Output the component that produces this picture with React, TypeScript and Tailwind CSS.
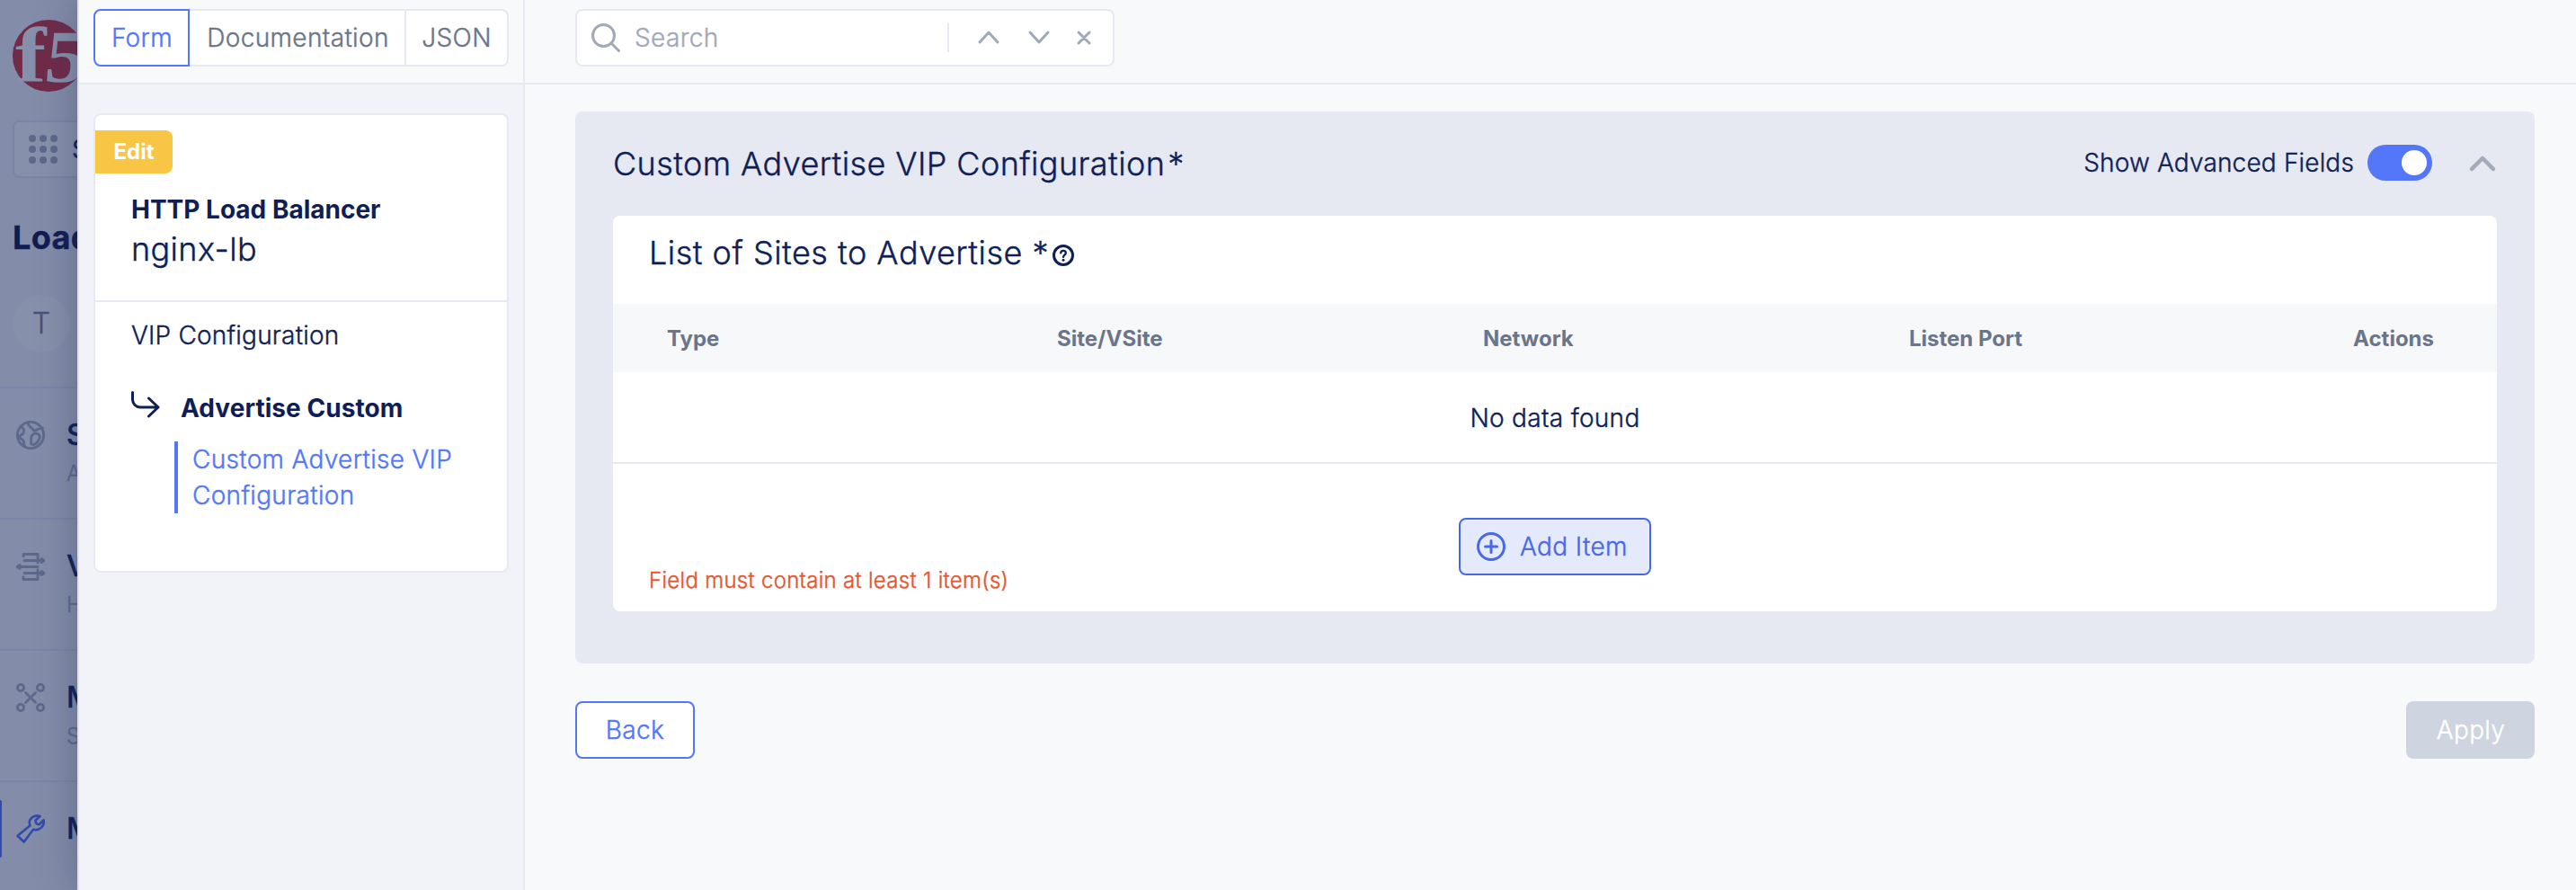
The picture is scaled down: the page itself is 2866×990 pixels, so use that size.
import type { ReactNode } from "react";

type NavRowProps = { icon: ReactNode; title: string; sub?: string; active?: boolean };

function Stroke({ size = 32, width = 3, className = "", children }: { size?: number; width?: number; className?: string; children: ReactNode }) {
  return (
    <svg
      width={size}
      height={size}
      viewBox={`0 0 ${size} ${size}`}
      fill="none"
      stroke="currentColor"
      strokeWidth={width}
      strokeLinecap="round"
      strokeLinejoin="round"
      className={`shrink-0 ${className}`}
    >
      {children}
    </svg>
  );
}

function NavRow({ icon, title, sub, active }: NavRowProps) {
  return (
    <div className="relative h-[146px] shrink-0 border-t-2 border-[#7a84a8] pt-[29px]">
      {active && <span className="absolute left-0 top-[20px] h-16 w-[2px] rounded-r-sm bg-[#2f4cad]" />}
      <div className="flex h-[46px] items-center">
        <div className={`ml-[18px] w-[56px] shrink-0 ${active ? "text-[#2f4cad]" : "text-[#5d688b]"}`}>{icon}</div>
        <span className="text-[32px] leading-[46px] font-medium">{title}</span>
      </div>
      {sub && <div className="ml-[74px] text-[24px] leading-[40px] text-[#5d688b]">{sub}</div>}
    </div>
  );
}

function ServiceNav() {
  return (
    <aside className="flex w-[86px] shrink-0 flex-col overflow-hidden whitespace-nowrap bg-[#838ca8] text-[#0f1d53]">
      <div className="ml-[14px] mt-[22px] h-20 w-20 shrink-0">
        <svg width="80" height="80" viewBox="0 0 80 80">
          <circle cx="40" cy="40" r="40" fill="#702b49" />
          <g fill="#8790aa" fontFamily="Liberation Serif, serif" fontWeight="700">
            <text transform="translate(3 69) scale(1.2 1)" fontSize="86">f</text>
            <text transform="translate(34 69) skewX(-6) scale(1.08 1)" fontSize="83">5</text>
          </g>
        </svg>
      </div>
      <div className="ml-[14px] mt-8 flex h-16 w-[200px] shrink-0 items-center rounded-lg border-2 border-[#7a84a5] bg-[#8790aa] pl-4">
        <div className="grid grid-cols-3 gap-1">
          {Array.from({ length: 9 }, (_, i) => (
            <span key={i} className="h-2 w-2 rounded-full bg-[#5d688b]" />
          ))}
        </div>
        <span className="ml-[16px] text-[28px] font-normal">S</span>
      </div>
      <div className="ml-[14px] mt-[40px] h-[52px] shrink-0 text-[36px] leading-[52px] font-bold">Load</div>
      <div className="ml-[14px] mt-[38px] flex h-16 w-16 shrink-0 items-center justify-center rounded-full bg-[#8790aa] text-[32px] text-[#46527b]">
        T
      </div>
      <div className="mt-[38px] flex flex-col">
        <NavRow
          title="S"
          sub="A"
          icon={
            <Stroke width={2.8}>
              <circle cx="16" cy="16" r="14.6" />
              <path d="M5.500 6.500q5 3 2 8-4 2-3.500 5 4 1 4.500 4-.5 3 1.500 5.500M12.500 2.500q2 4 4.500 5.500 2 1.500 2.500 3 3 .5 4-1.500l6-1.500M17 17q3-4 7-2.500 3 2 2 5-2 5-6 7-4 1-3.500-3z" />
            </Stroke>
          }
        />
        <NavRow
          title="V"
          sub="H"
          icon={
            <Stroke width={2.8}>
              <path d="M8 5V2.500h16V12M9 9.500h21M28 7.500l3 2-3 2M24 16.500H2M4 14.500l-3 2 3 2M9 23.500h21M28 21.500l3 2-3 2M24 20v10.500H8V28" />
            </Stroke>
          }
        />
        <NavRow
          title="M"
          sub="S"
          icon={
            <Stroke width={2.8}>
              <circle cx="5" cy="5" r="3.6" />
              <circle cx="27" cy="5" r="3.6" />
              <circle cx="5" cy="27" r="3.6" />
              <circle cx="27" cy="27" r="3.6" />
              <path d="M10.500 10.500l11 11M21.500 10.500l-11 11" />
            </Stroke>
          }
        />
        <NavRow
          active
          title="M"
          icon={
            <Stroke width={2.6}>
              <path d="M26.500 2L21.500 6.500l.3 2.700 1.500 1.500 2.400.3 4.800-4.800c1.500 6.500-4.500 12.500-11.500 10.500L8.700 30.500 1.500 23.700 15.500 12.300C12.500 5.500 19.500-.5 26.500 2z" />
            </Stroke>
          }
        />
      </div>
    </aside>
  );
}

function ViewTabs() {
  return (
    <div className="flex h-16 w-[462px] text-[#6b7589]">
      <button className="w-[107px] rounded-l-lg border-2 border-[#5377f8] bg-white pl-px text-[#5377f8]">Form</button>
      <button className="w-[241px] border-y-2 border-r-2 border-[#e6e9f2] bg-white pl-[2px]">Documentation</button>
      <button className="flex-1 rounded-r-lg border-y-2 border-r-2 border-[#e6e9f2] bg-white">JSON</button>
    </div>
  );
}

function OutlineCard() {
  return (
    <div className="ml-4 mt-8 h-[511px] w-[462px] rounded-lg border-2 border-[#e6e9f2] bg-white">
      <div className="mt-[17px] flex h-12 w-[86px] items-center justify-center rounded-r-lg bg-[#f8c544] text-[24px] font-bold tracking-normal text-white [-webkit-text-stroke:0px]">Edit</div>
      <div className="h-[143px] border-b-2 border-[#e6e9f2] pl-[40px] pt-[18px]">
        <div className="text-[28px] leading-[44px] font-bold tracking-normal [-webkit-text-stroke:0px]">HTTP Load Balancer</div>
        <div className="text-[36px] leading-[44px]">nginx-lb</div>
      </div>
      <div className="pl-[40px] pt-[15px]">
        <div className="leading-[44px] tracking-[0.007em]">VIP Configuration</div>
        <div className="mt-[37px] flex h-[44px]">
          <Stroke width={3} className="mt-[2px]">
            <path d="M1.500 2.500v8a8.500 8.500 0 0 0 8.500 8.500h20M19.500 9l10.500 10-10.500 10" />
          </Stroke>
          <span className="ml-[23px] font-bold leading-[44px] tracking-[0.002em] [-webkit-text-stroke:0px]">Advertise Custom</span>
        </div>
        <div className="ml-[48px] mt-[15px] w-[330px] border-l-4 border-[#5377f8] pl-[16px] leading-[40px] tracking-[0.011em] text-[#5377f8]">
          Custom Advertise VIP Configuration
        </div>
      </div>
    </div>
  );
}

function SearchBar() {
  return (
    <div className="flex h-16 w-[600px] items-center rounded-lg border-2 border-[#e6e9f2] bg-white pl-4 text-[#a0a9b9]">
      <Stroke width={3}>
        <circle cx="13.500" cy="13.500" r="12" />
        <path d="M22 22l8.500 8.500" />
      </Stroke>
      <span className="ml-[16px]">Search</span>
      <span className="ml-auto h-8 w-[2px] bg-[#e6e9f2]" />
      <svg width="182" height="32" viewBox="0 0 182 32" fill="none" stroke="currentColor" strokeWidth="3" strokeLinecap="round" strokeLinejoin="round">
        <path d="M34 21l10-11 10 11M90 10l10 11 10-11M144 10l12 12M156 10l-12 12" />
      </svg>
    </div>
  );
}

function SitesTable() {
  return (
    <div className="ml-[42px] h-[440px] w-[2096px] rounded-lg bg-white">
      <div className="flex h-[98px] pl-10">
        <span className="text-[36px] leading-[83px] tracking-[0.0135em]">List of Sites to Advertise *</span>
        <svg width="24" height="24" viewBox="0 0 24 24" fill="none" stroke="currentColor" strokeWidth="3" className="ml-[4px] mt-[32px]">
          <circle cx="12" cy="12" r="10.500" />
          <path d="M9.200 9.400c.2-3.300 5.600-3.300 5.600 0 0 2-2.600 2.300-2.800 4.400" strokeWidth="2.300" strokeLinecap="round" />
          <circle cx="12" cy="17.300" r="1.500" fill="currentColor" stroke="none" />
        </svg>
      </div>
      <div className="flex h-[76px] items-center bg-[#f7f8fa] pl-[60px] pr-[70px] pt-[2px] text-[24px] font-bold tracking-normal text-[#6b7589] [-webkit-text-stroke:0px]">
        <span className="w-[434px]">Type</span>
        <span className="w-[474px]">Site/VSite</span>
        <span className="w-[474px]">Network</span>
        <span>Listen Port</span>
        <span className="ml-auto">Actions</span>
      </div>
      <div className="flex h-[102px] items-center justify-center border-b-2 border-[#e6e9f2] pt-[2px] tracking-[0.011em]">No data found</div>
      <div className="flex justify-center pt-[60px]">
        <button className="flex h-16 w-[214px] items-center rounded-lg border-2 border-[#4968e6] bg-[#e5e9fc] pl-[18px] text-[#4968e6]">
          <Stroke width={3}>
            <circle cx="16" cy="16" r="14.500" />
            <path d="M16 9.500v13M9.500 16h13" />
          </Stroke>
          <span className="ml-[16px]">Add Item</span>
        </button>
      </div>
      <div className="-mt-[10px] ml-10 w-[500px] text-[24px] leading-8 tracking-[0.012em] text-[#e5552f]">Field must contain at least 1 item(s)</div>
    </div>
  );
}

function ConfigPanel() {
  return (
    <section className="h-[614px] w-[2180px] rounded-lg bg-[#e6e9f2]">
      <div className="flex h-[116px] items-center pb-[2px] pl-[42px] pr-[42px]">
        <h1 className="pt-[2px] text-[36px] font-light tracking-[0.011em]">
          Custom Advertise VIP Configuration<span className="ml-[3px]">*</span>
        </h1>
        <span className="ml-auto tracking-[0.006em]">Show Advanced Fields</span>
        <span className="ml-[15px] flex h-10 w-[72px] items-center justify-end rounded-full bg-[#5377f8] pr-[6px]">
          <span className="h-7 w-7 rounded-full bg-white" />
        </span>
        <svg width="32" height="24" viewBox="0 0 32 24" fill="none" stroke="#a3abbb" strokeWidth="4.500" strokeLinecap="round" strokeLinejoin="round" className="ml-[40px]">
          <path d="M4 19L16 7l12 12" />
        </svg>
      </div>
      <SitesTable />
    </section>
  );
}

export default function App() {
  return (
    <div className="flex h-[990px] w-[2866px] overflow-hidden bg-[#f7f9fb] font-['Inter',sans-serif] text-[28px] font-light tracking-[0.013em] text-[#0f1f56] [-webkit-text-stroke:0.4px]">
      <ServiceNav />
      <div className="z-10 flex flex-1 border-l-2 border-[#dfe2ee] bg-[#f7f9fb] shadow-[0_0_40px_rgba(40,60,100,0.4)]">
        <div className="flex w-[496px] shrink-0 flex-col border-r-2 border-[#e6e9f2]">
          <div className="h-[94px] shrink-0 border-b-2 border-[#e6e9f2] pl-4 pt-[10px]">
            <ViewTabs />
          </div>
          <div className="flex-1 bg-[#f2f3f9]">
            <OutlineCard />
          </div>
        </div>
        <main className="flex-1">
          <div className="h-[94px] border-b-2 border-[#e6e9f2] pl-14 pt-[10px]">
            <SearchBar />
          </div>
          <div className="pl-14 pt-[30px]">
            <ConfigPanel />
            <div className="mt-[42px] flex w-[2180px] justify-between">
              <button className="h-16 w-[133px] rounded-lg border-2 border-[#5377f8] bg-white text-[#5377f8]">Back</button>
              <button className="h-16 w-[143px] rounded-lg bg-[#cfd4e1] pl-px text-white">Apply</button>
            </div>
          </div>
        </main>
      </div>
    </div>
  );
}
